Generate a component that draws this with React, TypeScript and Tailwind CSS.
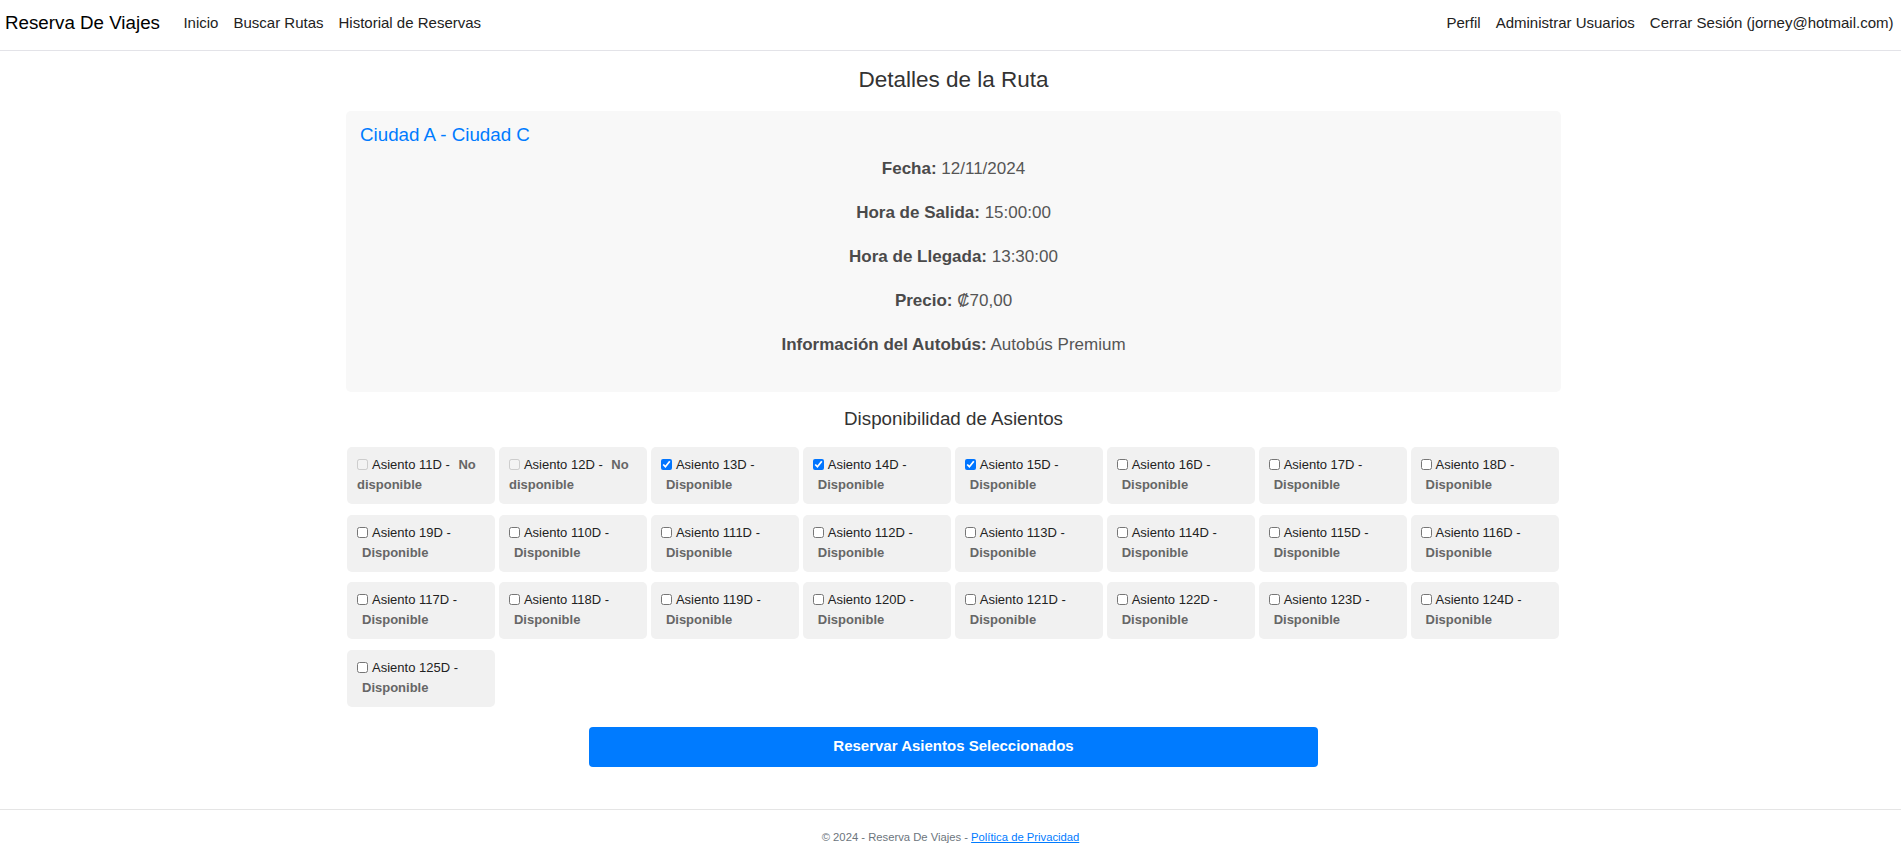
import { ReactNode } from 'react'

const font = { fontFamily: '"Liberation Sans", Arial, sans-serif' }

type Seat = { code: string; available: boolean; checked?: boolean }

const seats: Seat[] = [
  { code: '11D', available: false },
  { code: '12D', available: false },
  { code: '13D', available: true, checked: true },
  { code: '14D', available: true, checked: true },
  { code: '15D', available: true, checked: true },
]

// resto de asientos: 16D..19D y 110D..125D
for (let n = 16; n <= 19; n++) seats.push({ code: `${n}D`, available: true })
for (let n = 10; n <= 25; n++) seats.push({ code: `1${n}D`, available: true })

function NavLink({ children }: { children: ReactNode }) {
  return <a className="px-[7.5px] text-[15px] text-[#222] cursor-pointer">{children}</a>
}

function DetailLine({ label, value }: { label: string; value: string }) {
  return (
    <p className="text-center text-[17px] leading-[24px] mb-[20px] text-[#555]">
      <strong className="font-bold text-[#4a4a4a]">{label}</strong> {value}
    </p>
  )
}

function SeatCell({ seat }: { seat: Seat }) {
  return (
    <div className="bg-[#f1f1f1] rounded-[5px] h-[57px] pt-[8px] px-[10px] text-[13px] leading-[20px] text-[#222]">
      <label>
        <input
          type="checkbox"
          disabled={!seat.available}
          defaultChecked={seat.checked}
          className="w-[11px] h-[11px] m-0 mr-[4px] align-[-1px] accent-[#0075ff]"
        />
        Asiento {seat.code} -{' '}
        <span className="ml-[5px] font-bold text-[#666]">
          {seat.available ? 'Disponible' : 'No disponible'}
        </span>
      </label>
    </div>
  )
}

export default function App() {
  return (
    <div className="bg-white min-h-screen" style={font}>
      {/* Navbar */}
      <nav className="h-[51px] flex items-center justify-between pl-[5px] pb-[4px] border-b border-[#e3e3e8]">
        <div className="flex items-center">
          <span className="text-[18.75px] text-black mr-[16px]">Reserva De Viajes</span>
          <NavLink>Inicio</NavLink>
          <NavLink>Buscar Rutas</NavLink>
          <NavLink>Historial de Reservas</NavLink>
        </div>
        <div className="flex items-center">
          <NavLink>Perfil</NavLink>
          <NavLink>Administrar Usuarios</NavLink>
          <NavLink>Cerrar Sesión (jorney@hotmail.com)</NavLink>
        </div>
      </nav>

      {/* Main */}
      <div className="pl-[6px]">
        <main className="mx-auto w-[1215px]">
          <h2 className="text-center text-[22.5px] leading-[27px] text-[#333] mt-[15px] mb-[18px]">
            Detalles de la Ruta
          </h2>

          <div className="bg-[#f8f8f8] rounded-[5px] pt-[13px] px-[14px] pb-[15px]">
            <h3 className="text-[18.75px] leading-[22px] text-[#007bff] mb-[11px]">Ciudad A - Ciudad C</h3>
            <DetailLine label="Fecha:" value="12/11/2024" />
            <DetailLine label="Hora de Salida:" value="15:00:00" />
            <DetailLine label="Hora de Llegada:" value="13:30:00" />
            <DetailLine label="Precio:" value="₡70,00" />
            <DetailLine label="Información del Autobús:" value="Autobús Premium" />
          </div>

          <h4 className="text-center text-[18.75px] leading-[22px] text-[#333] mt-[16px] mb-[17px]">
            Disponibilidad de Asientos
          </h4>

          <div className="grid grid-cols-8 gap-x-[3.5px] gap-y-[10.5px] ml-px w-[1212px]">
            {seats.map((s) => (
              <SeatCell key={s.code} seat={s} />
            ))}
          </div>

          <button className="block mx-auto mt-[20px] w-[729px] h-[40px] rounded-[4px] bg-[#007bff] text-white font-bold text-[15px]">
            Reservar Asientos Seleccionados
          </button>
        </main>
      </div>

      {/* Footer */}
      <footer className="mt-[42px] border-t border-[#e5e5e5] pt-[19px] pb-[20px] text-center text-[11.25px] leading-[17px] text-[#6c757d]">
        © 2024 - Reserva De Viajes - <a className="text-[#007bff] underline cursor-pointer">Política de Privacidad</a>
      </footer>
    </div>
  )
}
